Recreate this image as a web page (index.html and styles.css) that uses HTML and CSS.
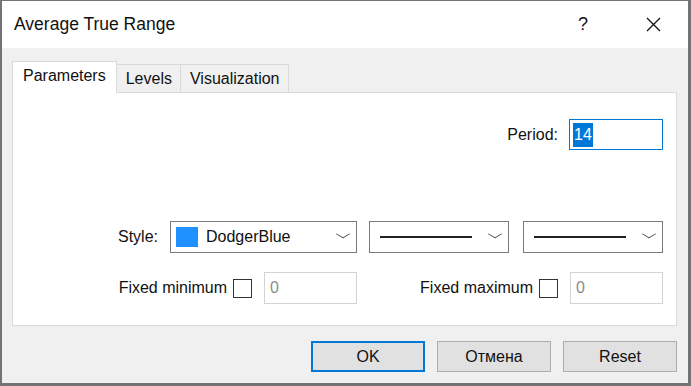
FILE: index.html
```html
<!DOCTYPE html>
<html lang="en">
<head>
    <meta charset="UTF-8">
    <title>Average True Range</title>
    <link rel="stylesheet" href="styles.css">
</head>
<body>
    <div class="window">
        <div class="titlebar">
            <span class="title">Average True Range</span>
            <span class="help">?</span>
            <span class="close">
                <svg width="15" height="15" viewBox="0 0 15 15">
                    <path d="M1 1 L14 14 M14 1 L1 14" stroke="#111" stroke-width="1.3" fill="none"/>
                </svg>
            </span>
        </div>

        <div class="dialog-body">
            <div class="tabs">
                <div class="tab active">Parameters</div>
                <div class="tab">Levels</div>
                <div class="tab">Visualization</div>
            </div>

            <div class="panel">
                <div class="period-row">
                    <label>Period:</label>
                    <div class="text-input focused"><span class="selected-text">14</span></div>
                </div>

                <div class="style-row">
                    <label>Style:</label>
                    <div class="select color-select">
                        <span class="swatch"></span>
                        <span class="select-text">DodgerBlue</span>
                        <span class="chevron"></span>
                    </div>
                    <div class="select line-select">
                        <span class="line-sample"></span>
                        <span class="chevron"></span>
                    </div>
                    <div class="select line-select last">
                        <span class="line-sample"></span>
                        <span class="chevron"></span>
                    </div>
                </div>

                <div class="fixed-row">
                    <div class="fixed-group">
                        <label>Fixed minimum</label>
                        <span class="checkbox"></span>
                        <div class="text-input disabled">0</div>
                    </div>
                    <div class="fixed-group">
                        <label>Fixed maximum</label>
                        <span class="checkbox"></span>
                        <div class="text-input disabled">0</div>
                    </div>
                </div>
            </div>

            <div class="buttons">
                <button class="btn default">OK</button>
                <button class="btn">Отмена</button>
                <button class="btn">Reset</button>
            </div>
        </div>
    </div>
</body>
</html>
```

FILE: styles.css
```css
* {
    margin: 0;
    padding: 0;
    box-sizing: border-box;
}

body {
    font-family: 'Liberation Sans', Arial, sans-serif;
    font-size: 16px;
    color: #111;
    background: #f0f0f0;
}

.window {
    width: 691px;
    height: 386px;
    display: flex;
    flex-direction: column;
    border-style: solid;
    border-color: #737373;
    border-width: 1px 3px 3px 2px;
    background: #f0f0f0;
}

/* title bar */
.titlebar {
    height: 47px;
    background: #fff;
    display: flex;
    align-items: center;
    padding-left: 12px;
}

.title {
    font-size: 17.5px;
    color: #111;
}

.help {
    margin-left: auto;
    font-size: 18px;
    margin-right: 58px;
}

.close {
    display: flex;
    margin-right: 27px;
}

/* body */
.dialog-body {
    flex: 1;
    display: flex;
    flex-direction: column;
    padding: 13px 11px 11px 10px;
}

.tabs {
    display: flex;
    align-items: flex-end;
    height: 31px;
}

.tab {
    height: 28px;
    display: flex;
    align-items: center;
    padding: 1px 8px 0 9px;
    border: 1px solid #d9d9d9;
    border-left: none;
    border-bottom: none;
    background: #f0f0f0;
}

.tab.active {
    position: relative;
    z-index: 1;
    height: 32px;
    margin-bottom: -1px;
    padding: 0 10px 4px 10px;
    border-left: 1px solid #d9d9d9;
    background: #fff;
}

.panel {
    height: 234px;
    background: #fff;
    border: 1px solid #d9d9d9;
    padding: 26px 13px 0 0;
}

.period-row {
    display: flex;
    justify-content: flex-end;
    align-items: center;
    gap: 11px;
}

.text-input {
    width: 94px;
    height: 31px;
    border: 1px solid #cfcfcf;
    background: #fff;
    display: flex;
    align-items: center;
    padding-left: 5px;
}

.text-input.focused {
    border-color: #0078d7;
    padding-left: 3px;
}

.selected-text {
    background: #0078d7;
    color: #fff;
    padding: 2px 1px;
    line-height: 20px;
}

.text-input.disabled {
    height: 32px;
    width: 93px;
    color: #8c8c8c;
    border-color: #d4d4d4;
}

/* style selects */
.style-row {
    display: flex;
    justify-content: flex-end;
    align-items: center;
    margin-top: 71px;
}

.style-row label {
    margin-right: 12px;
}

.select {
    height: 32px;
    border: 1px solid #7a7a7a;
    background: #fff;
    display: flex;
    align-items: center;
    padding: 0 8px 0 5px;
}

.color-select {
    width: 187px;
}

.line-select {
    width: 140px;
    margin-left: 12px;
    padding-left: 10px;
}

.line-select.last {
    margin-left: 14px;
}

.swatch {
    width: 22px;
    height: 20px;
    background: #1e90ff;
    margin-right: 8px;
}

.select-text {
    flex: 1;
}

.line-sample {
    width: 92px;
    height: 2px;
    background: #222;
    margin-right: auto;
}

.chevron {
    width: 10px;
    height: 10px;
    border-right: 1.3px solid #444;
    border-bottom: 1.3px solid #444;
    transform: scaleY(0.6) rotate(45deg);
    margin-top: -6px;
}

/* fixed min / max */
.fixed-row {
    display: flex;
    justify-content: flex-end;
    gap: 63px;
    margin-top: 19px;
}

.fixed-group {
    display: flex;
    align-items: center;
}

.checkbox {
    width: 19px;
    height: 19px;
    border: 1px solid #333;
    background: #fff;
    margin: 0 12px 0 6px;
}

/* buttons */
.buttons {
    display: flex;
    justify-content: flex-end;
    gap: 12px;
    margin-top: 15px;
}

.btn {
    width: 114px;
    height: 31px;
    font-family: inherit;
    font-size: 16px;
    color: #111;
    background: #e1e1e1;
    border: 1px solid #adadad;
}

.btn.default {
    border: 2px solid #0078d7;
}
```
